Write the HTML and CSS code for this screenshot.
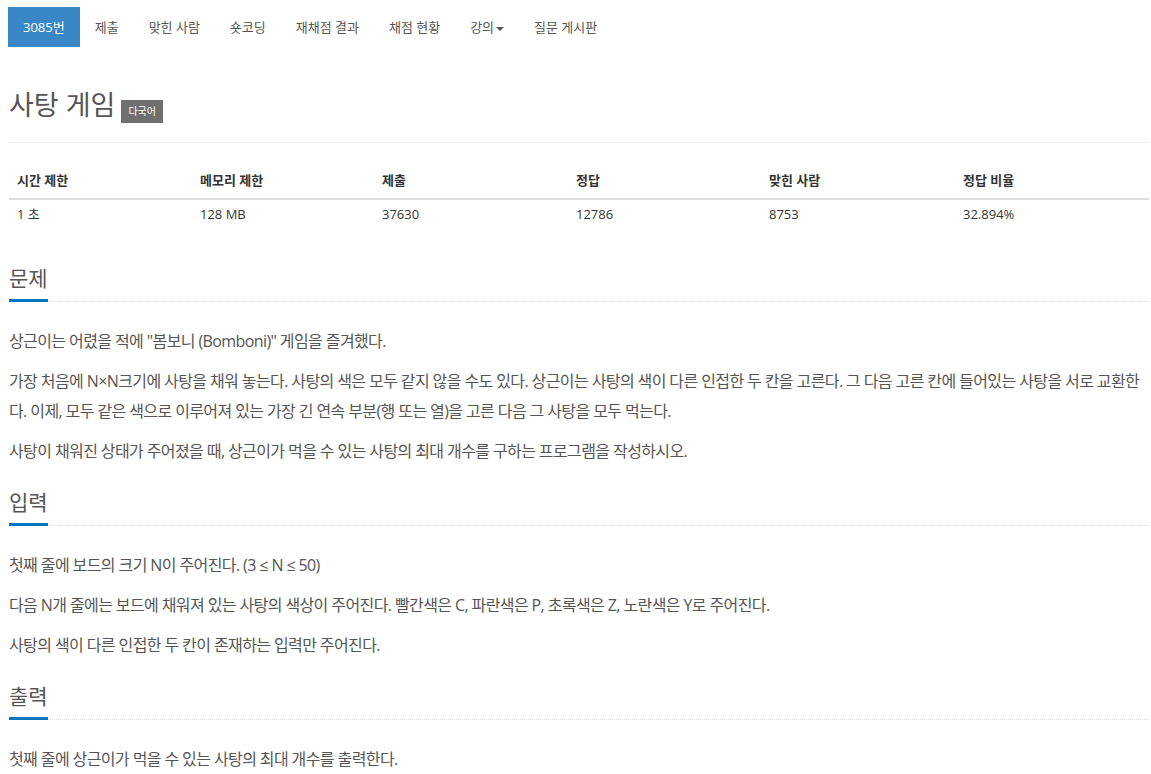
FILE: index.html
```html
<!DOCTYPE html>
<html lang="ko">
<head>
<meta charset="utf-8">
<title>사탕 게임</title>
<link rel="stylesheet" href="styles.css">
</head>
<body>
<nav class="tabs">
  <ul class="tab-list">
    <li class="tab active"><a>3085번</a></li>
    <li class="tab"><a>제출</a></li>
    <li class="tab"><a>맞힌 사람</a></li>
    <li class="tab"><a>숏코딩</a></li>
    <li class="tab"><a>재채점 결과</a></li>
    <li class="tab"><a>채점 현황</a></li>
    <li class="tab"><a>강의<span class="caret"></span></a></li>
    <li class="tab"><a>질문 게시판</a></li>
  </ul>
</nav>

<main class="page">
  <header class="page-header">
    <h1 class="title">사탕 게임</h1>
    <span class="label">다국어</span>
  </header>

  <table class="info">
    <thead>
      <tr>
        <th class="c1">시간 제한</th>
        <th class="c2">메모리 제한</th>
        <th class="c3">제출</th>
        <th class="c4">정답</th>
        <th class="c5">맞힌 사람</th>
        <th class="c6">정답 비율</th>
      </tr>
    </thead>
    <tbody>
      <tr>
        <td>1 초 </td>
        <td>128 MB</td>
        <td>37630</td>
        <td>12786</td>
        <td>8753</td>
        <td>32.894%</td>
      </tr>
    </tbody>
  </table>

  <section class="problem-section">
    <div class="headline"><h2>문제</h2></div>
    <div class="problem-text">
      <p>상근이는 어렸을 적에 "봄보니 (Bomboni)" 게임을 즐겨했다.</p>
      <p>가장 처음에 N×N크기에 사탕을 채워 놓는다. 사탕의 색은 모두 같지 않을 수도 있다. 상근이는 사탕의 색이 다른 인접한 두 칸을 고른다. 그 다음 고른 칸에 들어있는 사탕을 서로 교환한다. 이제, 모두 같은 색으로 이루어져 있는 가장 긴 연속 부분(행 또는 열)을 고른 다음 그 사탕을 모두 먹는다.</p>
      <p>사탕이 채워진 상태가 주어졌을 때, 상근이가 먹을 수 있는 사탕의 최대 개수를 구하는 프로그램을 작성하시오.</p>
    </div>
  </section>

  <section class="problem-section">
    <div class="headline"><h2>입력</h2></div>
    <div class="problem-text">
      <p>첫째 줄에 보드의 크기 N이 주어진다. (3 ≤ N ≤ 50)</p>
      <p>다음 N개 줄에는 보드에 채워져 있는 사탕의 색상이 주어진다. 빨간색은 C, 파란색은 P, 초록색은 Z, 노란색은 Y로 주어진다.</p>
      <p>사탕의 색이 다른 인접한 두 칸이 존재하는 입력만 주어진다.</p>
    </div>
  </section>

  <section class="problem-section">
    <div class="headline"><h2>출력</h2></div>
    <div class="problem-text">
      <p>첫째 줄에 상근이가 먹을 수 있는 사탕의 최대 개수를 출력한다.</p>
    </div>
  </section>
</main>
</body>
</html>
```

FILE: styles.css
```css
html, body {
  margin: 0;
  padding: 0;
  background: #fff;
}

body {
  font-family: "Open Sans", "Noto Sans CJK KR", sans-serif;
  font-feature-settings: "palt";
  color: #555;
  font-size: 13px;
}

.tabs {
  padding: 7px 0 0 8px;
}

.tab-list {
  list-style: none;
  margin: 0;
  padding: 0;
  display: flex;
}

.tab a {
  display: block;
  height: 40px;
  line-height: 40px;
  padding: 0 15px;
  color: #555;
  font-size: 13px;
}

.tab.active a {
  background: #3a87c8;
  color: #fff;
}

.caret {
  display: inline-block;
  width: 0;
  height: 0;
  margin-left: 2px;
  vertical-align: middle;
  border-top: 4px solid #555;
  border-left: 4px solid transparent;
  border-right: 4px solid transparent;
}

.page {
  padding: 0 2px 0 9px;
}

.page-header {
  display: flex;
  align-items: flex-end;
  gap: 6px;
  padding: 39px 0 18px;
  border-bottom: 1px solid #eee;
}

.title {
  margin: 0;
  font-size: 27px;
  font-weight: 400;
  line-height: 38px;
  color: #555;
}

.label {
  display: inline-block;
  background: #6f6f6f;
  color: #fff;
  font-size: 10px;
  line-height: 23px;
  height: 23px;
  padding: 0 7px;
  margin-bottom: 1px;
}

.info {
  width: 100%;
  table-layout: fixed;
  border-collapse: collapse;
  margin: 20px 0 30px;
  color: #333;
  font-size: 13px;
}

.info th, .info td {
  box-sizing: border-box;
  text-align: left;
  padding: 8px;
  line-height: 19px;
}

.info th {
  font-weight: 700;
  border-bottom: 2px solid #ddd;
}

.info td {
  padding-top: 5px;
}

.c1 { width: 183px; }
.c2 { width: 182px; }
.c3 { width: 194px; }
.c4 { width: 193px; }
.c5 { width: 194px; }
.c6 { width: 194px; }

.problem-section {
  margin-top: 20px;
}

.headline {
  border-bottom: 1px dotted #ddd;
  display: flex;
}

.headline h2 {
  margin: 0 0 -1px;
  font-size: 21px;
  font-weight: 400;
  line-height: 32px;
  padding-bottom: 5px;
  border-bottom: 3px solid #0076c0;
  color: #555;
}

.problem-text {
  padding-top: 14px;
  font-size: 16px;
  line-height: 30px;
  letter-spacing: -0.6px;
  color: #555;
}

.problem-text p {
  margin: 10px 0;
}
```
